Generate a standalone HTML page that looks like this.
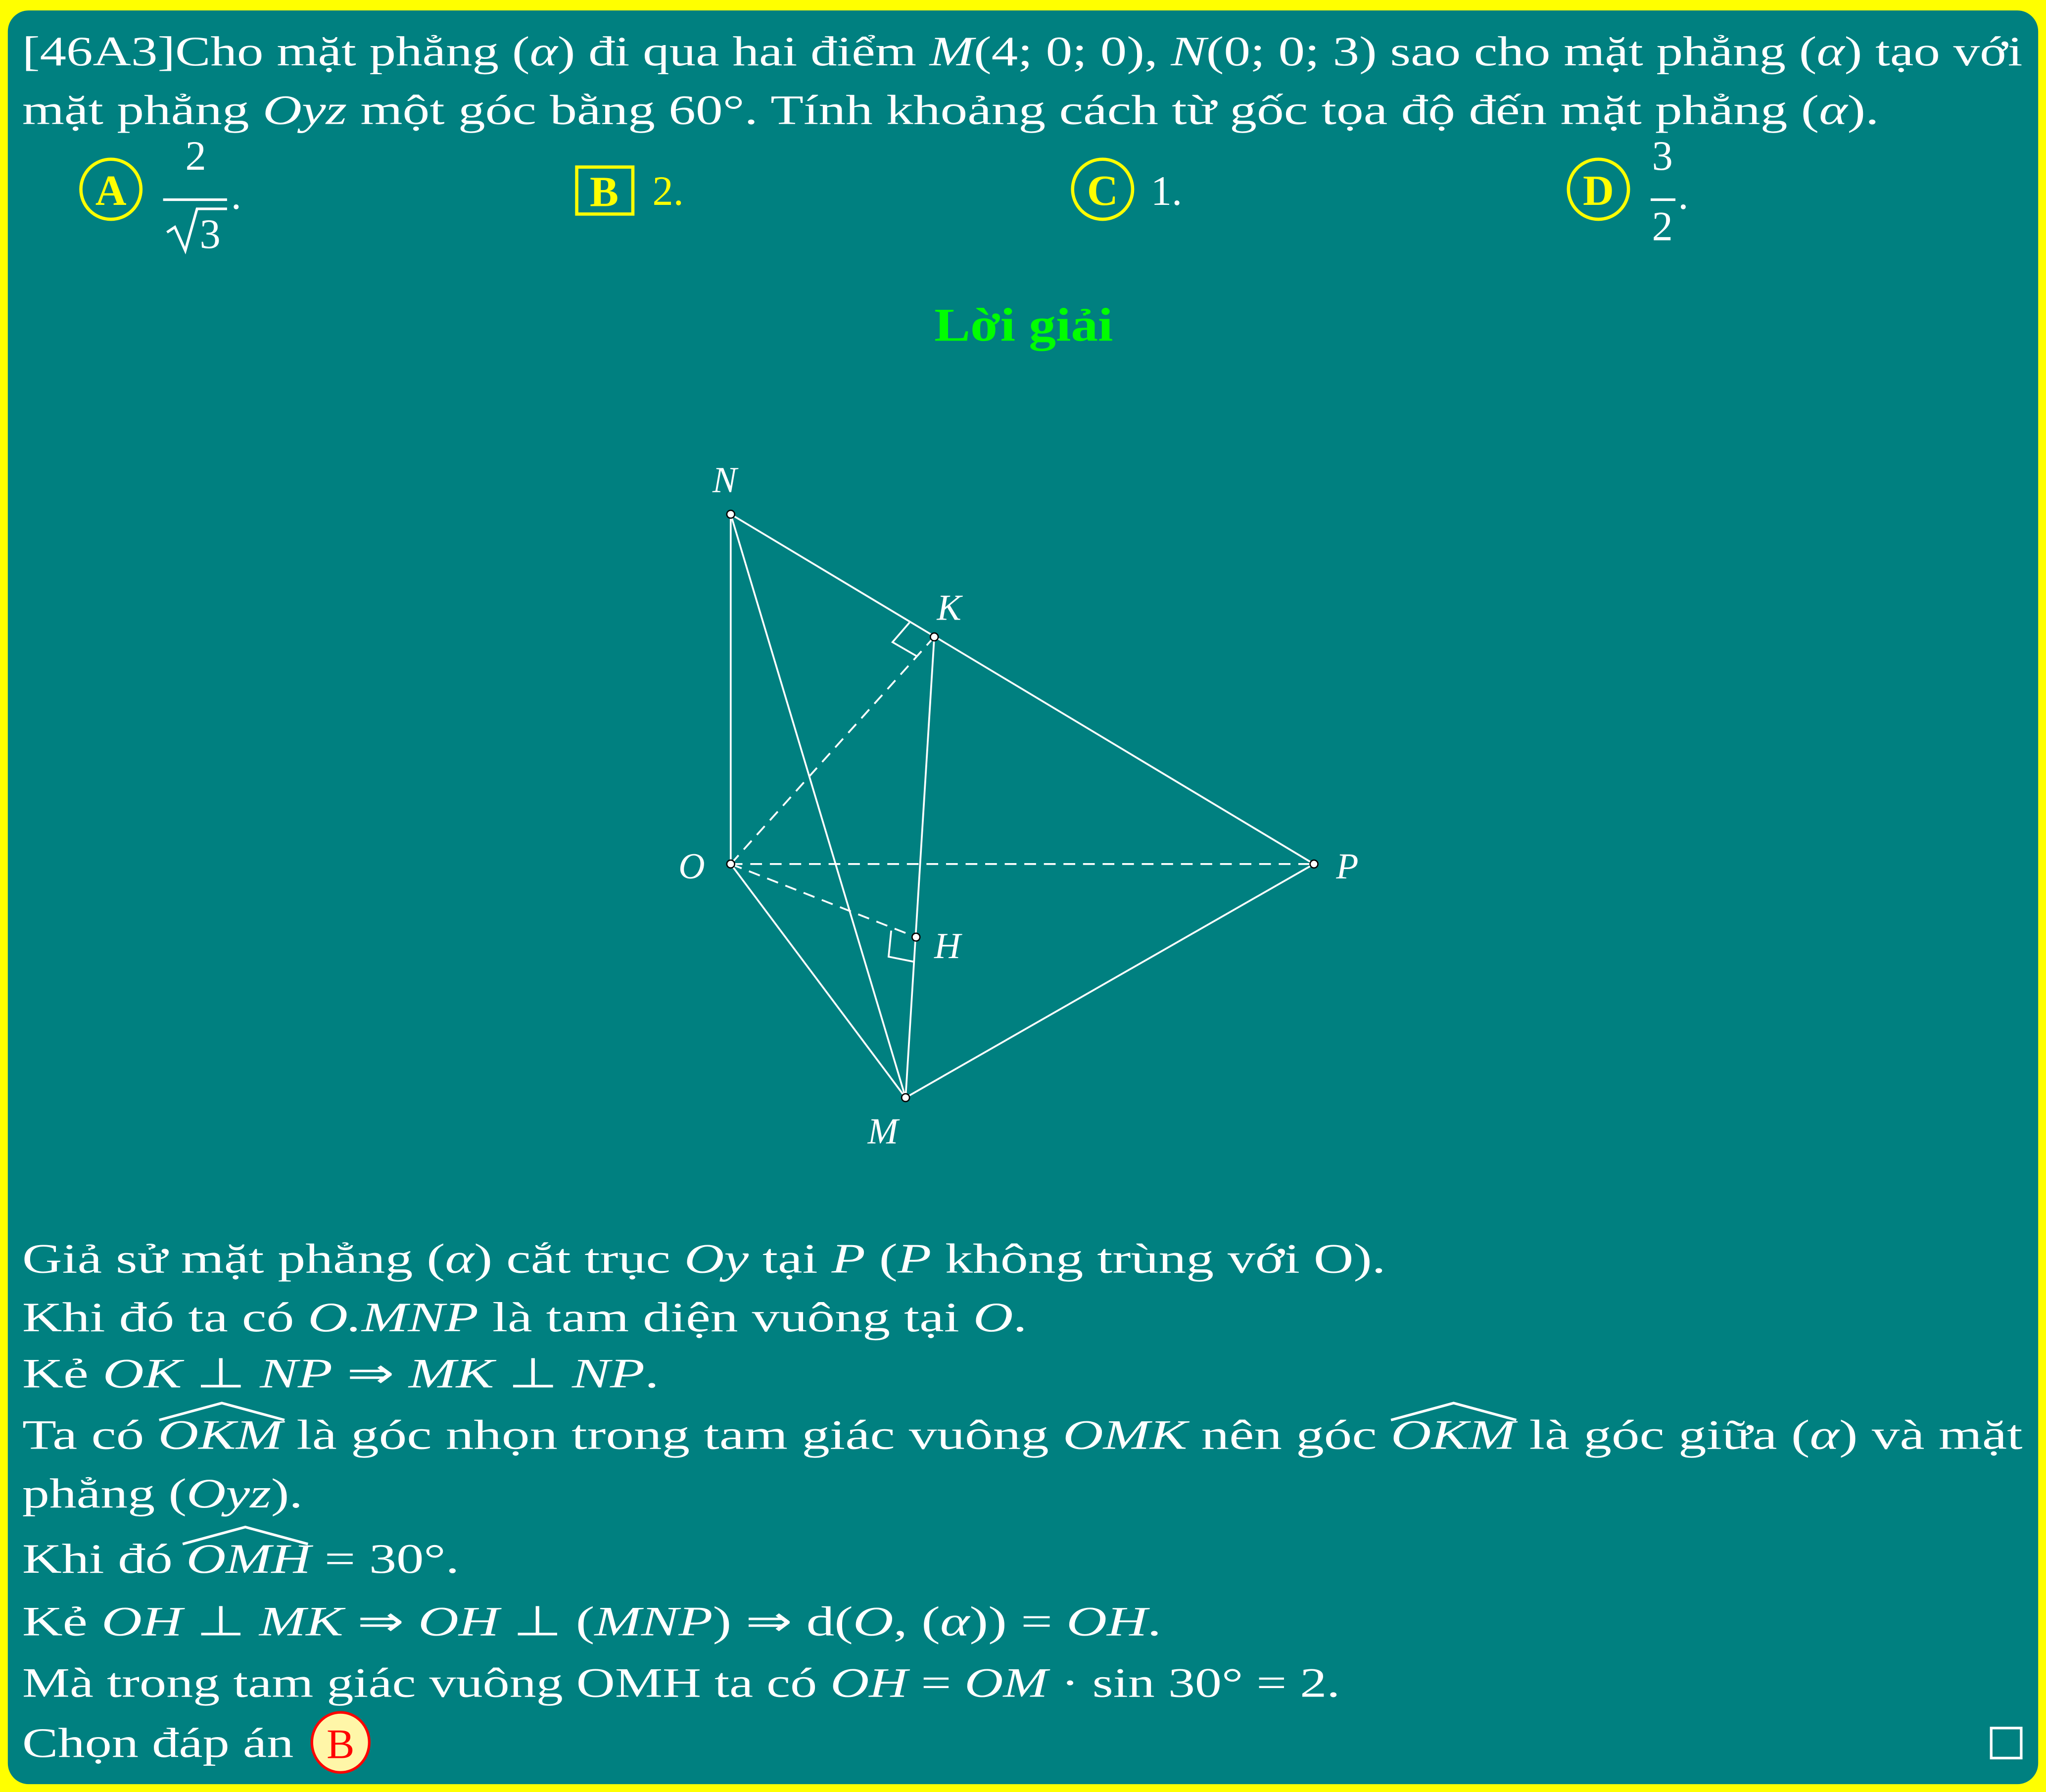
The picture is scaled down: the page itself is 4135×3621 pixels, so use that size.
<!DOCTYPE html>
<html><head><meta charset="utf-8"><style>
html,body{margin:0;padding:0;background:#ffff00;}
svg{display:block}
text{font-family:"Liberation Serif",serif;}
.w{fill:#fff;font-size:32px}
.i{font-style:italic}
</style></head><body>
<svg width="4135" height="3621" viewBox="0 0 1568 1373" preserveAspectRatio="none" xmlns="http://www.w3.org/2000/svg">
<rect x="0" y="0" width="1568" height="1373" fill="#ffff00"/>
<rect x="6" y="8" width="1556" height="1359" rx="16" fill="#008080"/>

<text class="w" x="17" y="50" textLength="1533" lengthAdjust="spacingAndGlyphs">[46A3]Cho mặt phẳng (<tspan class="i">α</tspan>) đi qua hai điểm <tspan class="i">M</tspan>(4; 0; 0), <tspan class="i">N</tspan>(0; 0; 3) sao cho mặt phẳng (<tspan class="i">α</tspan>) tạo với</text>
<text class="w" x="17" y="95" textLength="1423" lengthAdjust="spacingAndGlyphs">mặt phẳng <tspan class="i">Oyz</tspan> một góc bằng 60°. Tính khoảng cách từ gốc tọa độ đến mặt phẳng (<tspan class="i">α</tspan>).</text>

<circle cx="85" cy="145" r="23" fill="none" stroke="#ffff00" stroke-width="2.5"/>
<text x="85" y="157" text-anchor="middle" font-size="33" font-weight="bold" fill="#ffff00">A</text>
<text class="w" x="150" y="130" text-anchor="middle">2</text>
<line x1="125" y1="153" x2="174" y2="153" stroke="#fff" stroke-width="2"/>
<text class="w" x="177" y="160">.</text>
<path d="M128 178 L134 174 L142 192 L151 160 L174 160" fill="none" stroke="#fff" stroke-width="2"/>
<text class="w" x="153" y="190">3</text>

<rect x="442" y="128" width="43" height="36" fill="none" stroke="#ffff00" stroke-width="2.5"/>
<text x="463" y="158" text-anchor="middle" font-size="33" font-weight="bold" fill="#ffff00">B</text>
<text x="500" y="157" font-size="32" fill="#ffff00">2.</text>

<circle cx="845" cy="145" r="23" fill="none" stroke="#ffff00" stroke-width="2.5"/>
<text x="845" y="157" text-anchor="middle" font-size="33" font-weight="bold" fill="#ffff00">C</text>
<text class="w" x="882" y="157">1.</text>

<circle cx="1225" cy="145" r="23" fill="none" stroke="#ffff00" stroke-width="2.5"/>
<text x="1225" y="157" text-anchor="middle" font-size="33" font-weight="bold" fill="#ffff00">D</text>
<text class="w" x="1274" y="130" text-anchor="middle">3</text>
<line x1="1265" y1="153" x2="1284" y2="153" stroke="#fff" stroke-width="2"/>
<text class="w" x="1274" y="184" text-anchor="middle">2</text>
<text class="w" x="1286" y="160">.</text>

<text x="716" y="261" textLength="137" lengthAdjust="spacingAndGlyphs" font-size="36" font-weight="bold" fill="#00ff00">Lời giải</text>

<g stroke="#fff" stroke-width="1.4" fill="none">
<line x1="560" y1="394" x2="560" y2="662"/>
<line x1="560" y1="394" x2="694" y2="841"/>
<line x1="560" y1="394" x2="1007" y2="662"/>
<line x1="716" y1="488" x2="694" y2="841"/>
<line x1="560" y1="662" x2="694" y2="841"/>
<line x1="694" y1="841" x2="1007" y2="662"/>
<g stroke-dasharray="9,6">
<line x1="560" y1="662" x2="1007" y2="662"/>
<line x1="560" y1="662" x2="716" y2="488"/>
<line x1="560" y1="662" x2="702" y2="718"/>
</g>
<path d="M697 477 L684 492 L703 503"/>
<path d="M683 713 L681 733 L701 737"/>
</g>
<g fill="#fff" stroke="#000" stroke-width="1">
<circle cx="560" cy="394" r="3"/><circle cx="716" cy="488" r="3"/>
<circle cx="560" cy="662" r="3"/><circle cx="1007" cy="662" r="3"/>
<circle cx="702" cy="718" r="3"/><circle cx="694" cy="841" r="3"/>
</g>
<text x="546" y="377" class="w i" style="font-size:28px">N</text>
<text x="718" y="475" class="w i" style="font-size:28px">K</text>
<text x="520" y="673" class="w i" style="font-size:28px">O</text>
<text x="1024" y="673" class="w i" style="font-size:28px">P</text>
<text x="716" y="734" class="w i" style="font-size:28px">H</text>
<text x="665" y="876" class="w i" style="font-size:28px">M</text>

<text class="w" x="17" y="975" textLength="1045" lengthAdjust="spacingAndGlyphs">Giả sử mặt phẳng (<tspan class="i">α</tspan>) cắt trục <tspan class="i">Oy</tspan> tại <tspan class="i">P</tspan> (<tspan class="i">P</tspan> không trùng với O).</text>
<text class="w" x="17" y="1020" textLength="770" lengthAdjust="spacingAndGlyphs">Khi đó ta có <tspan class="i">O.MNP</tspan> là tam diện vuông tại <tspan class="i">O</tspan>.</text>
<text class="w" x="17" y="1063" textLength="488" lengthAdjust="spacingAndGlyphs">Kẻ <tspan class="i">OK</tspan> ⊥ <tspan class="i">NP</tspan> ⇒ <tspan class="i">MK</tspan> ⊥ <tspan class="i">NP</tspan>.</text>
<text class="w" x="17" y="1110" textLength="1533" lengthAdjust="spacingAndGlyphs">Ta có <tspan class="i">OKM</tspan> là góc nhọn trong tam giác vuông <tspan class="i">OMK</tspan> nên góc <tspan class="i">OKM</tspan> là góc giữa (<tspan class="i">α</tspan>) và mặt</text>
<text class="w" x="17" y="1155" textLength="215" lengthAdjust="spacingAndGlyphs">phẳng (<tspan class="i">Oyz</tspan>).</text>
<text class="w" x="17" y="1205" textLength="335" lengthAdjust="spacingAndGlyphs">Khi đó <tspan class="i">OMH</tspan> = 30°.</text>
<text class="w" x="17" y="1253" textLength="873" lengthAdjust="spacingAndGlyphs">Kẻ <tspan class="i">OH</tspan> ⊥ <tspan class="i">MK</tspan> ⇒ <tspan class="i">OH</tspan> ⊥ (<tspan class="i">MNP</tspan>) ⇒ d(<tspan class="i">O</tspan>, (<tspan class="i">α</tspan>)) = <tspan class="i">OH</tspan>.</text>
<text class="w" x="17" y="1300" textLength="1010" lengthAdjust="spacingAndGlyphs">Mà trong tam giác vuông OMH ta có <tspan class="i">OH</tspan> = <tspan class="i">OM</tspan> · sin 30° = 2.</text>
<text class="w" x="17" y="1346" textLength="208" lengthAdjust="spacingAndGlyphs">Chọn đáp án</text>
<g fill="none" stroke="#fff" stroke-width="2">
<path d="M122 1088 L170 1075 L218 1088"/>
<path d="M1066 1088 L1114 1075 L1162 1088"/>
<path d="M140 1183 L188 1170 L236 1183"/>
</g>
<ellipse cx="261" cy="1335" rx="22" ry="23" fill="#fff6a8" stroke="#ff0000" stroke-width="2"/>
<text x="261" y="1347" text-anchor="middle" font-size="32" fill="#ff0000">B</text>
<rect x="1526" y="1324" width="23" height="23" fill="none" stroke="#fff" stroke-width="2"/>
</svg>
</body></html>
